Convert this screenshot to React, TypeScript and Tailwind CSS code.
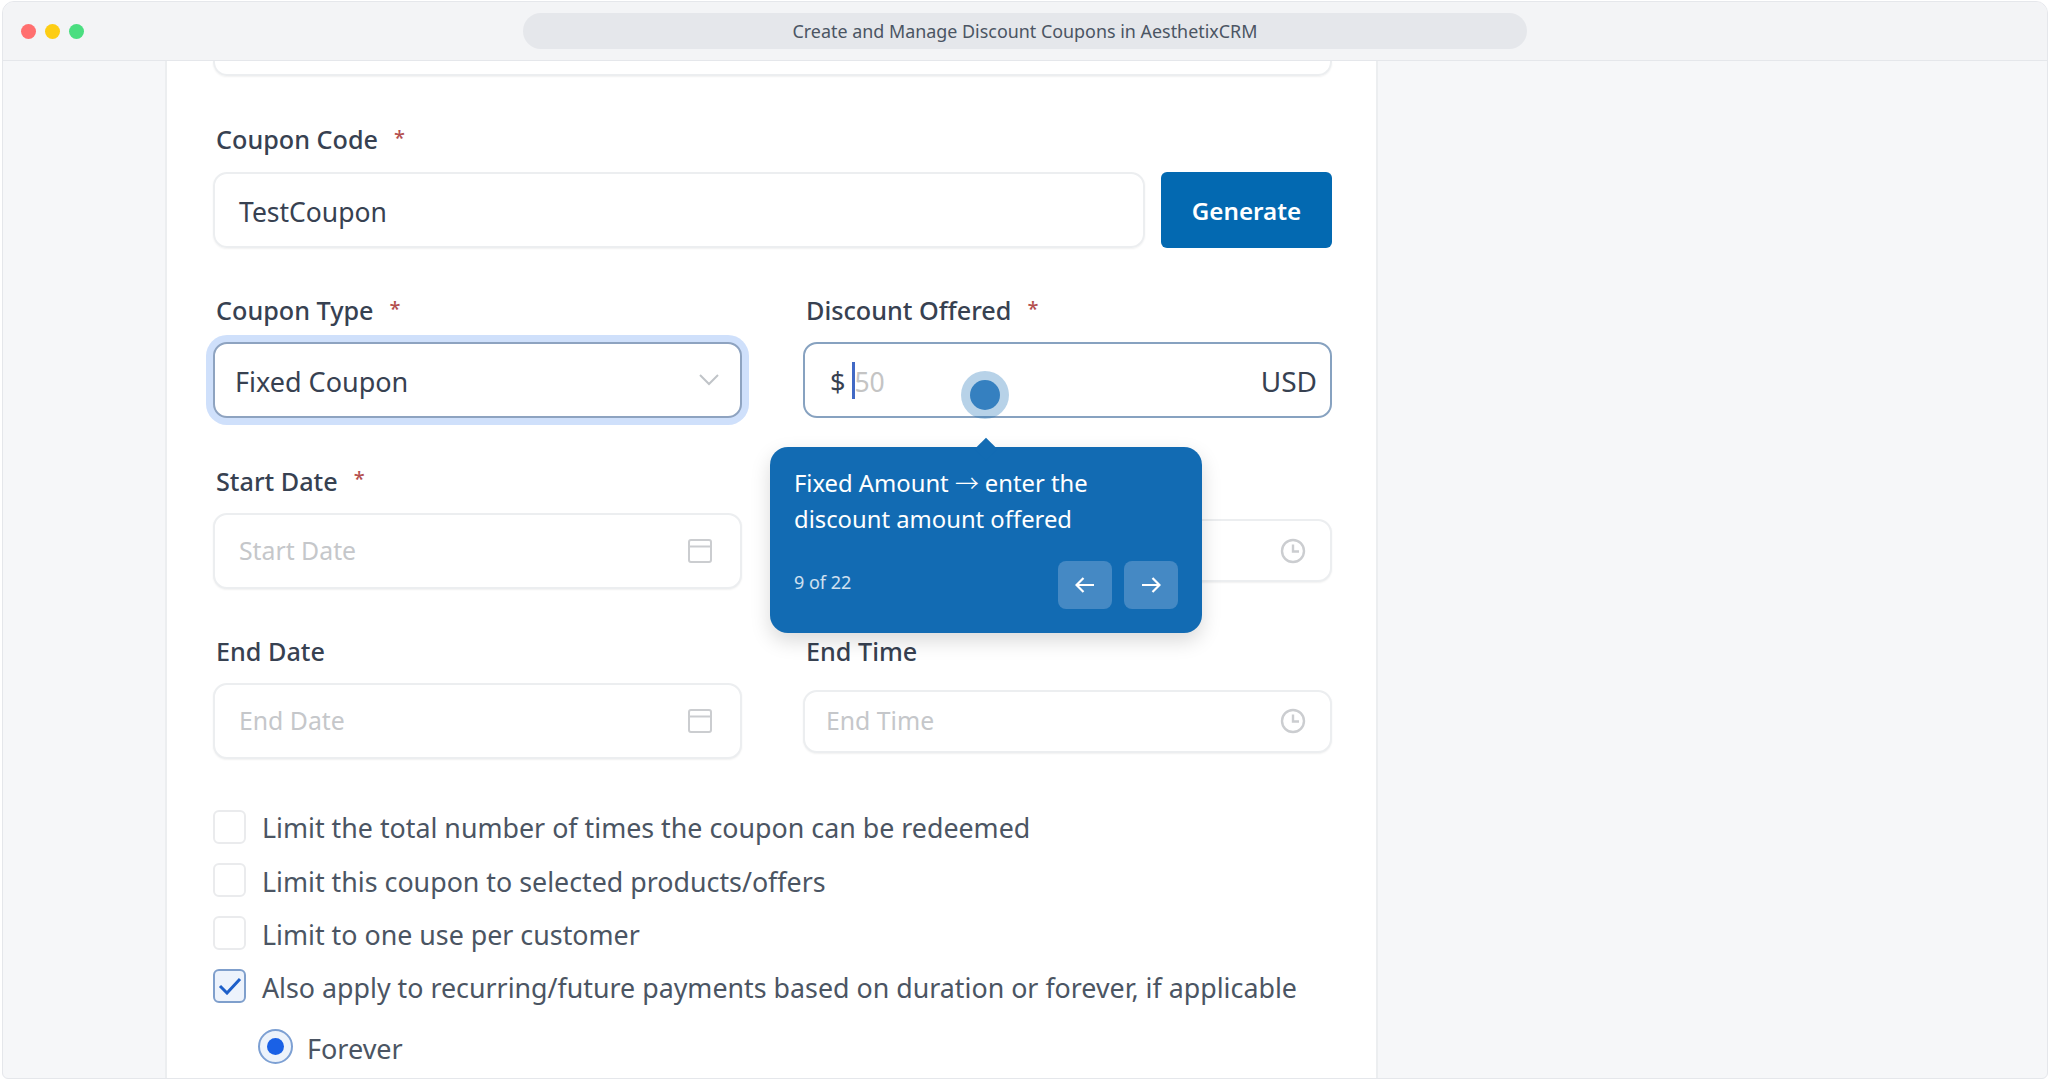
import { ReactNode } from "react"

const font = "font-['Noto_Sans','Open_Sans',sans-serif]"

function Label({ text, required }: { text: string; required?: boolean }) {
  return (
    <div className="flex h-9 items-center pl-[3px] text-[25.2px] font-medium text-[#374151]">
      <span>{text}</span>
      {required && <span className="ml-[16px] -mt-[5px] text-[20px] text-[#b4504f]">*</span>}
    </div>
  )
}

function CalendarIcon() {
  return (
    <svg width="26" height="26" viewBox="0 0 26 26" fill="none" stroke="#cbcdd0" strokeWidth="2">
      <rect x="2" y="2" width="22" height="22" rx="2" />
      <path d="M2 8.5h22" />
    </svg>
  )
}

function ClockIcon() {
  return (
    <svg width="26" height="26" viewBox="0 0 26 26" fill="none" stroke="#cbcdd0" strokeWidth="2.4">
      <circle cx="13" cy="13" r="11" />
      <path d="M13 6.5V13.5H19" />
    </svg>
  )
}

function DateField({ label, placeholder, required }: { label: string; placeholder: string; required?: boolean }) {
  return (
    <div>
      <Label text={label} required={required} />
      <div className="mt-[13px] flex h-[76px] items-center justify-between rounded-[14px] border-2 border-[#eceef0] bg-white pl-[24px] pr-[27px] shadow-[0_1px_2px_rgba(0,0,0,0.06)]">
        <span className="text-[24.8px] text-[#c5c7ca]">{placeholder}</span>
        <CalendarIcon />
      </div>
    </div>
  )
}

// Start Time sits behind the guide tooltip, so its texts stay empty there
function TimeField({ label, placeholder }: { label: string; placeholder: string }) {
  return (
    <div>
      <Label text={label} />
      <div className="mt-[13px] flex h-[76px] items-center">
        <div className="flex h-[63px] w-full items-center justify-between rounded-[14px] border-2 border-[#eceef0] bg-white pl-[21px] pr-[24px] shadow-[0_1px_2px_rgba(0,0,0,0.06)]">
          <span className="text-[24.8px] text-[#c5c7ca]">{placeholder}</span>
          <ClockIcon />
        </div>
      </div>
    </div>
  )
}

function CheckRow({ checked, children }: { checked?: boolean; children: ReactNode }) {
  return (
    <div className="flex h-[34px] items-center">
      <div
        className={
          checked
            ? "flex h-[34px] w-[33px] shrink-0 items-center justify-center rounded-[6px] border-2 border-[#7f9fcc] bg-[#edf3fc]"
            : "h-[34px] w-[33px] shrink-0 rounded-[6px] border-2 border-[#eaebed] bg-white"
        }
      >
        {checked && (
          <svg width="24" height="18" viewBox="0 0 24 18" fill="none" stroke="#1d5fc9" strokeWidth="3">
            <path d="M2 9l7 7L22 2" />
          </svg>
        )}
      </div>
      <span className="ml-[16px] whitespace-nowrap pt-[4px] text-[26.8px] text-[#4b5563]">{children}</span>
    </div>
  )
}

export default function App() {
  return (
    <div className={`${font} h-[1080px] w-[2050px] overflow-hidden bg-white p-[1px] px-[2px]`}>
      <div className="flex h-[1078px] flex-col overflow-hidden rounded-t-[12px] rounded-b-[6px] border border-[#e5e7eb] bg-[#f6f7f9]">
        {/* title bar */}
        <div className="relative flex h-[59px] shrink-0 items-center border-b border-[#e5e7eb] bg-[#f3f4f6] pl-[18px]">
          <div className="flex gap-[9px]">
            <span className="h-[15px] w-[15px] rounded-full bg-[#ff6f6f]" />
            <span className="h-[15px] w-[15px] rounded-full bg-[#fdcd14]" />
            <span className="h-[15px] w-[15px] rounded-full bg-[#4ade80]" />
          </div>
          <div className="ml-[439px] flex h-[36px] w-[1004px] items-center justify-center rounded-full bg-[#e5e7eb] text-[17.9px] text-[#4b5563]">
            Create and Manage Discount Coupons in AesthetixCRM
          </div>
        </div>

        {/* form panel */}
        <div className="ml-[162px] h-full w-[1213px] border-x-2 border-[#eceef0] bg-white pl-[46px] pr-[44px]">
          <div className="h-[15px] rounded-b-[14px] border-2 border-t-0 border-[#eceef0] shadow-[0_1px_2px_rgba(0,0,0,0.06)]" />

          <div className="mt-[46px]">
            <Label text="Coupon Code" required />
            <div className="mt-[14px] flex gap-4">
              <div className="flex h-[76px] flex-1 items-center rounded-[14px] border-2 border-[#eceef0] pl-[24px] pt-[5px] text-[26.5px] text-[#374151] shadow-[0_1px_2px_rgba(0,0,0,0.06)]">
                TestCoupon
              </div>
              <div className="flex h-[76px] w-[171px] items-center justify-center rounded-[6px] bg-[#0369b1] pt-[3px] text-[24.2px] font-semibold text-white">
                Generate
              </div>
            </div>
          </div>

          <div className="mt-[45px] grid grid-cols-2 gap-x-[61px] gap-y-[45.5px]">
            <div>
              <Label text="Coupon Type" required />
              <div className="mt-[13px] flex h-[76px] items-center justify-between rounded-[14px] border-2 border-[#8ea3c0] bg-white pl-[20px] pr-[21px] text-[27px] text-[#374151] shadow-[0_0_0_7px_#cfe0fb]">
                <span className="pt-[5px]">Fixed Coupon</span>
                <svg width="20" height="12" viewBox="0 0 20 12" fill="none" stroke="#c0c4c8" strokeWidth="2">
                  <path d="M1 1l9 9 9-9" />
                </svg>
              </div>
            </div>
            <div>
              <Label text="Discount Offered" required />
              <div className="mt-[13px] flex h-[76px] items-center justify-between rounded-[14px] border-2 border-[#87a2c0] bg-white pl-[25px] pr-[13px] text-[27px] text-[#374151]">
                <div className="flex items-center">
                  <span className="pt-[5px]">$</span>
                  <span className="ml-[7px] h-[37px] w-[3px] bg-[#4169c5]" />
                  <span className="-ml-[1px] pt-[5px] text-[26.5px] text-[#c4c4c4]">50</span>
                </div>
                <span className="pt-[2px] text-[28px]">USD</span>
              </div>
            </div>
            <DateField label="Start Date" placeholder="Start Date" required />
            <TimeField label="" placeholder="" />
            <DateField label="End Date" placeholder="End Date" />
            <TimeField label="End Time" placeholder="End Time" />
          </div>

          <div className="mt-[50.5px] flex flex-col gap-[19.33px]">
            <CheckRow>Limit the total number of times the coupon can be redeemed</CheckRow>
            <CheckRow>Limit this coupon to selected products/offers</CheckRow>
            <CheckRow>Limit to one use per customer</CheckRow>
            <CheckRow checked>Also apply to recurring/future payments based on duration or forever, if applicable</CheckRow>
          </div>

          <div className="ml-[45px] mt-[26px] flex h-[35px] items-center">
            <div className="flex h-[35px] w-[35px] items-center justify-center rounded-full border-2 border-[#7da0d3] bg-[#edf3fb]">
              <span className="h-[17px] w-[17px] rounded-full bg-[#1a61e6]" />
            </div>
            <span className="ml-[14px] pt-[4px] text-[27px] text-[#4b5563]">Forever</span>
          </div>
        </div>
      </div>

      {/* pulse marker */}
      <div className="absolute left-[961px] top-[371px] flex h-[48px] w-[48px] items-center justify-center rounded-full bg-[#126bb3]/30">
        <span className="h-[30px] w-[30px] rounded-full bg-[#3580c0]" />
      </div>

      {/* guide tooltip */}
      <div className="absolute left-[770px] top-[447px] h-[186px] w-[432px] rounded-[18px] bg-[#126bb3] pl-[24px] pr-[24px] pt-[17px] text-white shadow-[0_8px_20px_rgba(0,0,0,0.15)]">
        <div className="absolute -top-[6px] left-[208px] h-[16px] w-[16px] rotate-45 bg-[#126bb3]" />
        <p className="relative text-[23.8px] leading-[36px]">
          Fixed Amount <span className="font-['Noto_Sans_CJK_SC'] font-light">→</span> enter the
          <br />
          discount amount offered
        </p>
        <div className="mt-[24px] flex items-center justify-between">
          <span className="-mt-[5px] text-[18px] text-white/80">9 of 22</span>
          <div className="flex gap-3">
            <div className="flex h-[48px] w-[54px] items-center justify-center rounded-[8px] bg-[#4589c4]">
              <svg width="20" height="16" viewBox="0 0 20 16" fill="none" stroke="white" strokeWidth="2.2">
                <path d="M19 8H2M8.5 1L1.5 8l7 7" />
              </svg>
            </div>
            <div className="flex h-[48px] w-[54px] items-center justify-center rounded-[8px] bg-[#4589c4]">
              <svg width="20" height="16" viewBox="0 0 20 16" fill="none" stroke="white" strokeWidth="2.2">
                <path d="M1 8h17M11.5 1l7 7-7 7" />
              </svg>
            </div>
          </div>
        </div>
      </div>
    </div>
  )
}
